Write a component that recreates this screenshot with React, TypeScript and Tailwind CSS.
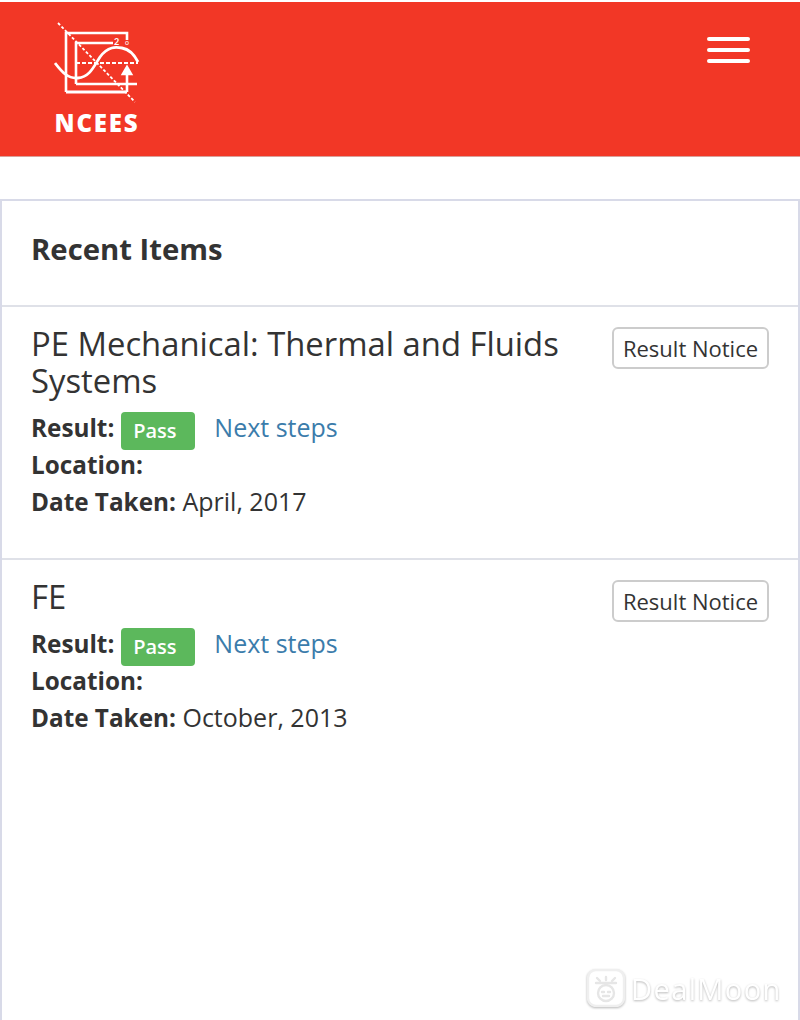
type Item = {
  title: string[];
  date: string;
};

const items: Item[] = [
  { title: ['PE Mechanical: Thermal and Fluids', 'Systems'], date: 'April, 2017' },
  { title: ['FE'], date: 'October, 2013' },
];

function Logo() {
  return (
    <svg width="86" height="82" viewBox="0 0 86 82" fill="none" stroke="white" strokeWidth="2.6" className="block">
      {/* outer and inner frames */}
      <path d="M12 70V11H73V18" />
      <path d="M12 70H73" strokeWidth="3" />
      <path d="M22 62V21H59" />
      <path d="M22 62H83" />
      {/* dashed diagonal */}
      <path d="M4 1L81 80" strokeWidth="1.8" strokeDasharray="3 2" />
      {/* dashed level */}
      <path d="M22 41H84" strokeWidth="1.8" strokeDasharray="4 2" />
      {/* curve */}
      <path d="M1 41C8 50 14 57 24 56C36 55 40 44 46 35C54 24 62 25 68 26C74 27 80 32 84 40" strokeWidth="2.8" />
      {/* arrow */}
      <path d="M73 70V50" />
      <path d="M69 52L73 45L77 52Z" fill="white" />
      <text x="60" y="23" fill="white" stroke="none" fontSize="9" fontWeight="700" fontFamily="Lato, sans-serif">2</text>
      <text x="71" y="23" fill="white" stroke="none" fontSize="7" fontFamily="Lato, sans-serif">o</text>
    </svg>
  );
}

function DealMoonIcon() {
  return (
    <svg width="38" height="38" viewBox="0 0 38 38" fill="none" stroke="#e6e6e6" strokeWidth="2.4" strokeLinecap="round">
      <rect x="1" y="1" width="36" height="36" rx="8" fill="white" stroke="#efefef" />
      <path d="M9 14H29" />
      <path d="M10 9L13 12M28 9L25 12M19 8V11" />
      <circle cx="19" cy="24" r="8" />
      <path d="M15 23H17M21 23H23M16 27H22" />
    </svg>
  );
}

function Row({ item }: { item: Item }) {
  return (
    <div className="flex justify-between items-start border-b-2 border-[#dfe1e8] pl-[29px] pr-[29px] pt-[18px] pb-[38px] last:border-b-0">
      <div>
        <h3 className="text-[32.8px] leading-[37px] text-[#333]">
          {item.title.map((line) => (
            <div key={line}>{line}</div>
          ))}
        </h3>
        <div className="mt-[10px] text-[25px] leading-[37px] text-[#333]">
          <div className="flex h-[37px] items-center">
            <b className="text-[24.3px] font-bold">Result:</b>
            <span className="ml-[7px] mt-[6px] flex h-[38px] w-[74px] shrink-0 items-center justify-center rounded-[4px] bg-[#5cb85c] pr-[7px] text-[20px] font-semibold text-white">
              Pass
            </span>
            <a className="ml-[19px] text-[#3b7cab]">Next steps</a>
          </div>
          <div>
            <b className="text-[24.3px] font-bold">Location:</b>
          </div>
          <div>
            <b className="text-[24.3px] font-bold">Date Taken:</b> {item.date}
          </div>
        </div>
      </div>
      <button className="mt-[2px] h-[42px] w-[157px] rounded-[6px] border-2 border-[#ccc] bg-white text-[22px] text-[#333]">
        Result Notice
      </button>
    </div>
  );
}

export default function App() {
  return (
    <div className="relative h-[1020px] w-[800px] overflow-hidden bg-white pt-[2px] font-['Open_Sans',sans-serif]">
      {/* Header */}
      <header className="flex h-[155px] items-start justify-between border-b border-[#d9a09a] bg-[#f23726] pl-[54px] pr-[50px]">
        <div className="flex flex-col items-center pt-[20px]">
          <Logo />
          <span className="mt-[4px] text-[24px] leading-[30px] font-extrabold tracking-[1.8px] text-white">NCEES</span>
        </div>
        <button className="mt-[35px] flex w-[43px] flex-col gap-[7px]">
          <span className="h-[4px] rounded-full bg-white" />
          <span className="h-[4px] rounded-full bg-white" />
          <span className="h-[4px] rounded-full bg-white" />
        </button>
      </header>

      {/* Recent items panel */}
      <section className="mt-[42px] h-[830px] border-2 border-b-0 border-[#d8dae8]">
        <div className="flex h-[106px] items-center border-b-2 border-[#dfe1e8] pb-[6px] pl-[29px]">
          <h2 className="text-[29.3px] font-bold text-[#333]">Recent Items</h2>
        </div>
        {items.map((item) => (
          <Row key={item.date} item={item} />
        ))}
      </section>

      {/* Watermark */}
      <div className="absolute bottom-[13px] left-[587px] flex items-center gap-[6px] text-white [filter:drop-shadow(0_1px_1px_rgba(0,0,0,0.28))]">
        <DealMoonIcon />
        <span className="text-[29px] leading-none tracking-[1.4px]">DealMoon</span>
      </div>
    </div>
  );
}
